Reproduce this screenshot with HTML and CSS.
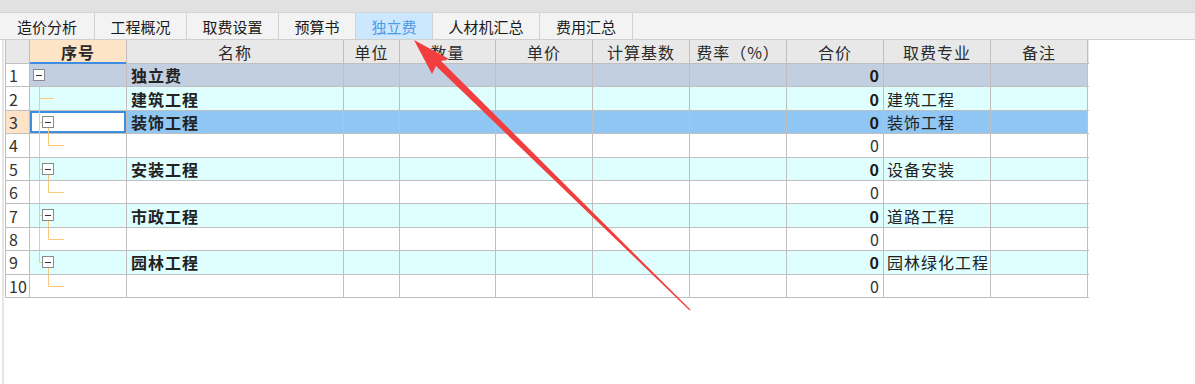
FILE: index.html
```html
<!DOCTYPE html>
<html lang="zh-CN">
<head>
    <meta charset="UTF-8">
    <title>独立费</title>
    <link rel="stylesheet" href="styles.css">
</head>
<body>
    <div class="topbar"></div>

    <!-- 页签 -->
    <div class="tabs">
        <div class="tab t1">造价分析</div>
        <div class="tab t2">工程概况</div>
        <div class="tab t3">取费设置</div>
        <div class="tab t4">预算书</div>
        <div class="tab t5 active">独立费</div>
        <div class="tab t6">人材机汇总</div>
        <div class="tab t7">费用汇总</div>
    </div>

    <!-- 表格 -->
    <div class="main">
        <div class="grid">
            <div class="row head">
                <div class="c"></div>
                <div class="c seq">序号</div>
                <div class="c">名称</div>
                <div class="c">单位</div>
                <div class="c">数量</div>
                <div class="c">单价</div>
                <div class="c">计算基数</div>
                <div class="c">费率（%）</div>
                <div class="c">合价</div>
                <div class="c">取费专业</div>
                <div class="c">备注</div>
            </div>

            <div class="row lv0">
                <div class="c num">1</div>
                <div class="c tree">
                    <svg class="lines" viewBox="0 0 96 22.4">
                        <line x1="9.5" y1="16.5" x2="9.5" y2="23"/>
                        <rect class="box" x="3.5" y="5.5" width="11" height="11"/>
                        <line class="minus" x1="6" y1="11.5" x2="12" y2="11.5"/>
                    </svg>
                </div>
                <div class="c name">独立费</div>
                <div class="c"></div><div class="c"></div><div class="c"></div><div class="c"></div><div class="c"></div>
                <div class="c total b">0</div>
                <div class="c fee"></div>
                <div class="c"></div>
            </div>

            <div class="row lv1">
                <div class="c num">2</div>
                <div class="c tree">
                    <svg class="lines" viewBox="0 0 96 22.4">
                        <line x1="9.5" y1="-1" x2="9.5" y2="23"/>
                        <line x1="9.5" y1="11.5" x2="24" y2="11.5"/>
                    </svg>
                </div>
                <div class="c name">建筑工程</div>
                <div class="c"></div><div class="c"></div><div class="c"></div><div class="c"></div><div class="c"></div>
                <div class="c total b">0</div>
                <div class="c fee">建筑工程</div>
                <div class="c"></div>
            </div>

            <div class="row sel">
                <div class="c num">3</div>
                <div class="c tree focus">
                    <svg class="lines" viewBox="0 0 96 22.4">
                        <line x1="9.5" y1="-1" x2="9.5" y2="23"/>
                        <line x1="9.5" y1="11.5" x2="12.5" y2="11.5"/>
                        <line x1="18.5" y1="16.5" x2="18.5" y2="23"/>
                        <rect class="box" x="12.5" y="5.5" width="11" height="11"/>
                        <line class="minus" x1="15" y1="11.5" x2="21" y2="11.5"/>
                    </svg>
                </div>
                <div class="c name">装饰工程</div>
                <div class="c"></div><div class="c"></div><div class="c"></div><div class="c"></div><div class="c"></div>
                <div class="c total b">0</div>
                <div class="c fee">装饰工程</div>
                <div class="c"></div>
            </div>

            <div class="row">
                <div class="c num">4</div>
                <div class="c tree">
                    <svg class="lines" viewBox="0 0 96 22.4">
                        <line x1="9.5" y1="-1" x2="9.5" y2="23"/>
                        <line x1="18.5" y1="-1" x2="18.5" y2="11.5"/>
                        <line x1="18.5" y1="11.5" x2="34" y2="11.5"/>
                    </svg>
                </div>
                <div class="c name"></div>
                <div class="c"></div><div class="c"></div><div class="c"></div><div class="c"></div><div class="c"></div>
                <div class="c total">0</div>
                <div class="c fee"></div>
                <div class="c"></div>
            </div>

            <div class="row lv1">
                <div class="c num">5</div>
                <div class="c tree">
                    <svg class="lines" viewBox="0 0 96 22.4">
                        <line x1="9.5" y1="-1" x2="9.5" y2="23"/>
                        <line x1="9.5" y1="11.5" x2="12.5" y2="11.5"/>
                        <line x1="18.5" y1="16.5" x2="18.5" y2="23"/>
                        <rect class="box" x="12.5" y="5.5" width="11" height="11"/>
                        <line class="minus" x1="15" y1="11.5" x2="21" y2="11.5"/>
                    </svg>
                </div>
                <div class="c name">安装工程</div>
                <div class="c"></div><div class="c"></div><div class="c"></div><div class="c"></div><div class="c"></div>
                <div class="c total b">0</div>
                <div class="c fee">设备安装</div>
                <div class="c"></div>
            </div>

            <div class="row">
                <div class="c num">6</div>
                <div class="c tree">
                    <svg class="lines" viewBox="0 0 96 22.4">
                        <line x1="9.5" y1="-1" x2="9.5" y2="23"/>
                        <line x1="18.5" y1="-1" x2="18.5" y2="11.5"/>
                        <line x1="18.5" y1="11.5" x2="34" y2="11.5"/>
                    </svg>
                </div>
                <div class="c name"></div>
                <div class="c"></div><div class="c"></div><div class="c"></div><div class="c"></div><div class="c"></div>
                <div class="c total">0</div>
                <div class="c fee"></div>
                <div class="c"></div>
            </div>

            <div class="row lv1">
                <div class="c num">7</div>
                <div class="c tree">
                    <svg class="lines" viewBox="0 0 96 22.4">
                        <line x1="9.5" y1="-1" x2="9.5" y2="23"/>
                        <line x1="9.5" y1="11.5" x2="12.5" y2="11.5"/>
                        <line x1="18.5" y1="16.5" x2="18.5" y2="23"/>
                        <rect class="box" x="12.5" y="5.5" width="11" height="11"/>
                        <line class="minus" x1="15" y1="11.5" x2="21" y2="11.5"/>
                    </svg>
                </div>
                <div class="c name">市政工程</div>
                <div class="c"></div><div class="c"></div><div class="c"></div><div class="c"></div><div class="c"></div>
                <div class="c total b">0</div>
                <div class="c fee">道路工程</div>
                <div class="c"></div>
            </div>

            <div class="row">
                <div class="c num">8</div>
                <div class="c tree">
                    <svg class="lines" viewBox="0 0 96 22.4">
                        <line x1="9.5" y1="-1" x2="9.5" y2="23"/>
                        <line x1="18.5" y1="-1" x2="18.5" y2="11.5"/>
                        <line x1="18.5" y1="11.5" x2="34" y2="11.5"/>
                    </svg>
                </div>
                <div class="c name"></div>
                <div class="c"></div><div class="c"></div><div class="c"></div><div class="c"></div><div class="c"></div>
                <div class="c total">0</div>
                <div class="c fee"></div>
                <div class="c"></div>
            </div>

            <div class="row lv1">
                <div class="c num">9</div>
                <div class="c tree">
                    <svg class="lines" viewBox="0 0 96 22.4">
                        <line x1="9.5" y1="-1" x2="9.5" y2="11.5"/>
                        <line x1="9.5" y1="11.5" x2="12.5" y2="11.5"/>
                        <line x1="18.5" y1="16.5" x2="18.5" y2="23"/>
                        <rect class="box" x="12.5" y="5.5" width="11" height="11"/>
                        <line class="minus" x1="15" y1="11.5" x2="21" y2="11.5"/>
                    </svg>
                </div>
                <div class="c name">园林工程</div>
                <div class="c"></div><div class="c"></div><div class="c"></div><div class="c"></div><div class="c"></div>
                <div class="c total b">0</div>
                <div class="c fee">园林绿化工程</div>
                <div class="c"></div>
            </div>

            <div class="row">
                <div class="c num">10</div>
                <div class="c tree">
                    <svg class="lines" viewBox="0 0 96 22.4">
                        <line x1="18.5" y1="-1" x2="18.5" y2="11.5"/>
                        <line x1="18.5" y1="11.5" x2="34" y2="11.5"/>
                    </svg>
                </div>
                <div class="c name"></div>
                <div class="c"></div><div class="c"></div><div class="c"></div><div class="c"></div><div class="c"></div>
                <div class="c total">0</div>
                <div class="c fee"></div>
                <div class="c"></div>
            </div>
        </div>
    </div>

    <!-- 标注箭头 -->
    <svg class="arrow" viewBox="0 0 1195 384">
        <polygon points="414,40 449,59 441,61 690.4,309.6 689.6,310.4 436,66 432,74"/>
    </svg>
</body>
</html>
```

FILE: styles.css
```css
body {
    margin: 0;
    width: 1195px;
    height: 384px;
    overflow: hidden;
    background: #fff;
    font-family: "Noto Sans CJK SC", "Noto Sans", sans-serif;
    color: #222;
    position: relative;
}

.topbar {
    height: 12px;
    background: #e1e1e1;
    border-bottom: 1px solid #d4d4d4;
}

.tabs {
    display: flex;
    height: 26px;
    background: #f3f3f3;
    border-bottom: 1px solid #cfcfcf;
}

.tab {
    box-sizing: border-box;
    border-right: 1px solid #d2d2d2;
    font-size: 15px;
    line-height: 26px;
    padding-top: 1px;
    text-align: center;
    color: #1a1a1a;
}

.t1 { width: 95px; }
.t2 { width: 92px; }
.t3 { width: 92px; }
.t4 { width: 77px; }
.t5 { width: 77px; }
.t6 { width: 107px; }
.t7 { width: 93px; }

.tab.active {
    background: #cce8ff;
    color: #4d9be6;
}

.main {
    height: 344px;
    margin-left: 2px;
    border-left: 2px solid #e6e6e6;
    padding-left: 1px;
}

.grid {
    width: 1083px;
    border-left: 1px solid #bfbfbf;
}

.row {
    display: grid;
    grid-template-columns: 24px 97px 217px 56px 96px 97px 97px 97px 97px 107px 97px;
    height: 23.4px;
    box-sizing: border-box;
    border-bottom: 1px solid #bfbfbf;
    font-size: 16px;
    letter-spacing: 1px;
}

.row.head {
    height: 24px;
    background: #e8e8e8;
}

.c {
    box-sizing: border-box;
    border-right: 1px solid #bfbfbf;
    display: flex;
    align-items: center;
    overflow: hidden;
    white-space: nowrap;
    position: relative;
}

.head .c {
    justify-content: center;
    color: #2a2a2a;
}

.head .seq {
    background: #fde4c6;
    font-weight: bold;
    box-shadow: inset 0 -2px 0 #3d8ee0;
    margin-bottom: -1px;
}

.num {
    background: #fff;
    padding-left: 3px;
    letter-spacing: 0;
    color: #333;
}

.name {
    padding-left: 4px;
    font-weight: bold;
}

.total {
    justify-content: flex-end;
    padding-right: 3px;
    color: #333;
}

.total.b {
    font-weight: bold;
    color: #1a1a1a;
}

.fee {
    padding-left: 3px;
}

.lv0 .c { background: #c2cfe1; }
.lv1 .c { background: #dfffff; }
.sel .c { background: #90c6f4; }

.lv0 .num,
.lv1 .num { background: #fff; }

.sel .num { background: #fde4c6; }

.sel .focus {
    background: #fff;
    box-shadow: inset 0 0 0 2px #3d8ee0;
}

.lines {
    display: block;
    width: 96px;
    height: 22.4px;
    overflow: visible;
}

.lines line {
    stroke: #fdc77a;
    stroke-width: 1;
}

.lines .box {
    fill: #fff;
    stroke: #8a8a8a;
}

.lines .minus {
    stroke: #333;
}

.arrow {
    position: absolute;
    left: 0;
    top: 0;
    width: 1195px;
    height: 384px;
    pointer-events: none;
}

.arrow polygon {
    fill: #f23e3e;
}
```
